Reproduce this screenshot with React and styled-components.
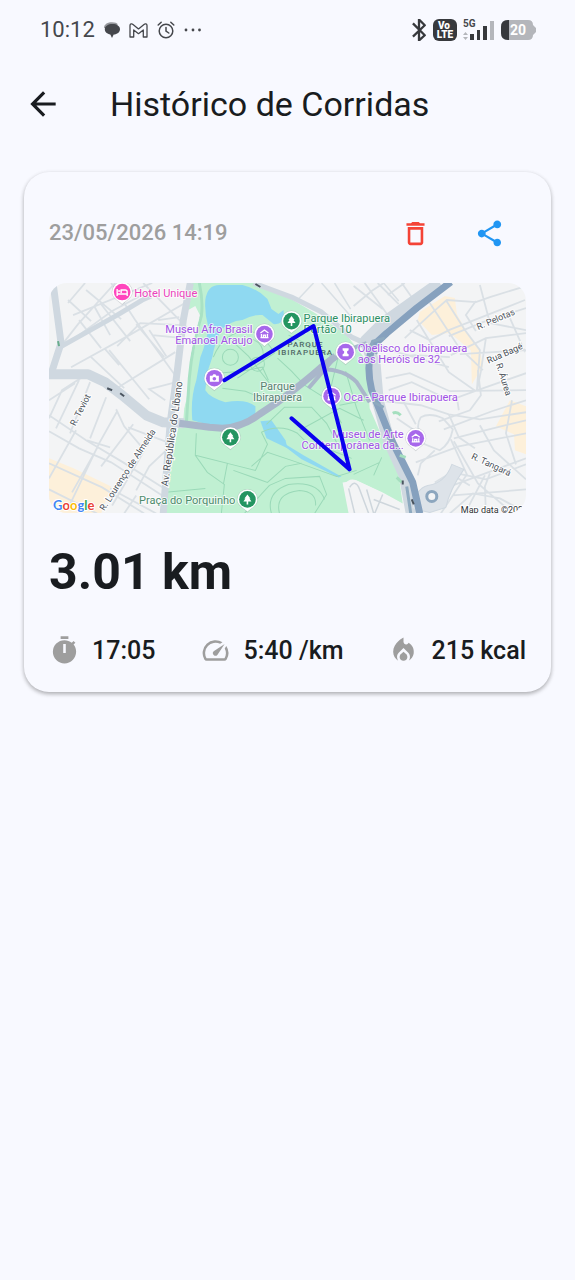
import React from "react";
import styled, { createGlobalStyle } from "styled-components";
import {
  MdArrowBack,
  MdDeleteOutline,
  MdLocalFireDepartment,
  MdShare,
  MdSpeed,
} from "react-icons/md";

const GlobalStyle = createGlobalStyle`
  * { box-sizing: border-box; }
  body {
    margin: 0;
    background: #f8f9ff;
    color: #191c20;
    font-family: Roboto, "Liberation Sans", sans-serif;
  }
`;

const Screen = styled.div`
  min-height: 100vh;
  background: #f8f9ff;
`;

const StatusBar = styled.div`
  display: flex;
  align-items: center;
  justify-content: space-between;
  height: 60px;
  padding: 0 38px 0 40px;
  color: #45474c;
`;

const StatusGroup = styled.div`
  display: flex;
  align-items: center;
  gap: ${(p) => p.$gap}px;
`;

const Clock = styled.time`
  font-size: 22px;
  line-height: 28px;
`;

const AppBar = styled.header`
  display: flex;
  align-items: center;
  gap: 30px;
  height: 88px;
  padding: 0 6px;
`;

const IconButton = styled.button`
  display: flex;
  align-items: center;
  justify-content: center;
  width: 74px;
  height: 74px;
  padding: 0;
  border: 0;
  border-radius: 50%;
  background: transparent;
  color: ${(p) => p.$color};
  font-size: ${(p) => p.$size}px;
  cursor: pointer;
`;

const Title = styled.h1`
  margin: 0;
  font-size: 34px;
  line-height: 42px;
  font-weight: 400;
  white-space: nowrap;
`;

const Main = styled.main`
  padding: 24px;
`;

const RunCard = styled.article`
  padding: 24px 25px 26px;
  border-radius: 25px;
  background: #f8f9ff;
  box-shadow: 0 2px 4px rgba(0, 0, 0, 0.28), 0 1px 5px rgba(0, 0, 0, 0.06);
`;

const CardHeader = styled.div`
  display: flex;
  align-items: center;
  justify-content: space-between;
`;

const Actions = styled.div`
  display: flex;
`;

const RunDate = styled.time`
  color: #9e9e9e;
  font-size: 22px;
  line-height: 28px;
  font-weight: 500;
`;

const MapFrame = styled.figure`
  margin: 13px 0 0;
  border-radius: 18px;
  overflow: hidden;

  svg {
    display: block;
    width: 100%;
    height: auto;
  }
`;

const Distance = styled.h2`
  margin: 24px 0 0;
  font-size: 50px;
  line-height: 70px;
  font-weight: 700;
`;

const Stats = styled.ul`
  display: flex;
  justify-content: space-between;
  margin: 28px 0 0;
  padding: 0;
  list-style: none;
`;

const Stat = styled.li`
  display: flex;
  align-items: center;
  gap: 12px;
  font-size: 25px;
  line-height: 31px;
  font-weight: 500;
  white-space: nowrap;

  svg {
    width: 31px;
    height: 31px;
    color: #9e9e9e;
  }
`;

const ChatIcon = () => (
  <svg width="16" height="16" viewBox="0 0 16 16" aria-hidden="true">
    <path d="M0 6C0 2 4 .3 8 .3c3 0 5 .9 6 2.200L3 6Z" fill="#96989d" />
    <path d="M8.500 2C12.800 2 16 4 16 7.200c0 3-2.900 5.100-6.300 5.300L8 16l-1.700-3.600C3.200 12 .8 9.900.8 7.200.8 4 4.200 2 8.500 2Z" fill="#45474c" />
  </svg>
);

const MailIcon = () => (
  <svg width="19" height="15" viewBox="0 0 19 15" aria-hidden="true">
    <path d="M1 2.500C1 .8 2.800.4 4 1.400l5.500 4.500L15 1.400c1.200-1 3-.6 3 1.100V14h-3.700V7l-4.800 3.700L4.700 7v7H1Z" fill="none" stroke="#45474c" strokeWidth="1.300" strokeLinejoin="round" />
  </svg>
);

const AlarmIcon = () => (
  <svg width="18" height="18" viewBox="0 0 18 18" fill="none" stroke="#45474c" strokeWidth="1.500" strokeLinecap="round" aria-hidden="true">
    <circle cx="9" cy="10" r="6.800" />
    <path d="M9 6.500V10l2.800 2M1.200 4 4.200 1.200M16.800 4 13.800 1.200" />
  </svg>
);

const MoreIcon = () => (
  <svg width="18" height="4" viewBox="0 0 18 4" fill="#45474c" aria-hidden="true">
    <circle cx="2" cy="2" r="1.400" />
    <circle cx="9" cy="2" r="1.400" />
    <circle cx="15.500" cy="2" r="1.400" />
  </svg>
);

const BluetoothIcon = () => (
  <svg width="16" height="22" viewBox="4 1.500 15 21" aria-hidden="true">
    <path d="M5.700 5.700 17 17 11.500 22V2L17 7.500 5.700 18.300" fill="none" stroke="#37393d" strokeWidth="2.200" strokeLinejoin="round" />
  </svg>
);

const VolteIcon = () => (
  <svg width="24" height="22" viewBox="0 0 24 22" role="img" aria-label="VoLTE">
    <rect width="24" height="22" rx="6" fill="#37393d" />
    <g fill="#fff" fontFamily="Roboto, sans-serif" fontWeight="900" textAnchor="middle">
      <text x="11" y="10" fontSize="10">Vo</text>
      <text x="12" y="19" fontSize="10">LTE</text>
    </g>
  </svg>
);

const SignalIcon = () => (
  <svg width="32" height="22" viewBox="0 0 32 22" role="img" aria-label="5G">
    <text x="0" y="8" fontFamily="Roboto, sans-serif" fontWeight="700" fontSize="10" fill="#45474c">5G</text>
    <path d="m0 16 2.500-3L5 16ZM0 18l2.500 3L5 18Z" fill="#b4b6bb" />
    <path d="M7 15h4v6H7ZM14 11h3v10h-3ZM20 7h4v14h-4Z" fill="#37393d" />
    <path d="M27 2h4v19h-4Z" fill="#b4b6bb" />
  </svg>
);

const BatteryIcon = () => (
  <svg width="36" height="20" viewBox="0 0 36 20" role="img" aria-label="20">
    <path d="M7 0h20q5 0 5 5l3 3v4l-3 3q0 5-5 5H7q-7 0-7-7V7q0-7 7-7Z" fill="#b4b6bb" />
    <path d="M8 0H7Q0 0 0 7v6q0 7 7 7h1Z" fill="#37393d" />
    <text x="17" y="15" fontFamily="Roboto, sans-serif" fontWeight="700" fontSize="14" fill="#fff" textAnchor="middle">20</text>
  </svg>
);

const TimerIcon = () => (
  <svg viewBox="0 0 24 24" fill="currentColor" aria-hidden="true">
    <path d="M19.030 7.390 20.450 5.970C20 5.460 19.550 5 19.040 4.560L17.620 6C16.070 4.740 14.120 4 12 4A9 9 0 0 0 3 13 9 9 0 0 0 12 22C17 22 21 17.970 21 13 21 10.880 20.260 8.930 19.030 7.390M13 14H11V7H13M15 1H9V3H15Z" />
  </svg>
);

const purple = "#a152e6";
const green = "#2c9064";

const pinGlyphs = {
  bed: <path d="M-5-3v7M-5 2H5V0Q5-2 3-2H-1V1M5 1v3M-4-1h2" fill="none" stroke="#fff" strokeWidth="1.400" />,
  museum: <path d="M-4-1 0-4 4-1M-4 3.500H4M-3 0v3M3 0v3M-1 3V1h2v2" fill="none" stroke="#fff" strokeWidth="1.300" />,
  camera: (
    <g>
      <path d="M-4.500-2.500H-2L-1-4H1L2-2.500H4.500V3.500H-4.500Z" fill="#fff" />
      <circle cy=".5" r="1.800" fill="#a768eb" />
    </g>
  ),
  tree: <path d="M0-5 3-1H2L4 2H.8V5H-.8V2H-4L-2-1H-3Z" fill="#fff" />,
  monument: <path d="M-3-4H3V-2L1.500-1V1L3 2V4H-3V2L-1.500 1V-1L-3-2Z" fill="#fff" />,
};

const Pin = ({ x, y, color, glyph }) => (
  <g transform={`translate(${x} ${y})`}>
    <path d="M0-10.500A10.500 10.500 0 0 1 10.500 0C10.500 6 5 8 0 13-5 8-10.500 6-10.500 0A10.500 10.500 0 0 1 0-10.500Z" fill="#8b959b" opacity=".35" />
    <path d="M0-10A10 10 0 0 1 10 0C10 5.500 4.500 8 0 12-4.500 8-10 5.500-10 0A10 10 0 0 1 0-10Z" fill="#fff" />
    <circle r="8.300" fill={color} />
    {pinGlyphs[glyph]}
  </g>
);

const MapLabel = ({ x, y, color, anchor = "start", lines }) => (
  <g fill={color} textAnchor={anchor} stroke="#fff" strokeOpacity=".7" strokeWidth="2" paintOrder="stroke" strokeLinejoin="round">
    {lines.map((line, i) => (
      <text key={line} x={x} y={y + i * 11}>{line}</text>
    ))}
  </g>
);

const StreetLabel = ({ x, y, angle, size = 9, children }) => (
  <text transform={`translate(${x} ${y}) rotate(${angle})`} fontSize={size} fill="#4a5159" textAnchor="middle" stroke="#fff" strokeWidth="2" paintOrder="stroke">
    {children}
  </text>
);

const RouteMap = () => (
  <svg viewBox="50 283 476 230" role="img" aria-label="Parque Ibirapuera">
    <rect x="50" y="283" width="476" height="230" fill="#f3f4f5" />

    {/* commercial blocks */}
    <g fill="#fdf0da">
      <path d="M50 458 75 468 112 486 102 513H50Z" />
      <path d="M420 312 445 296 455 298 457 314 468 334 480 350 483 366 472 384 471 350 450 333 432 335 418 320Z" />
      <path d="M510 400 526 406V454L515 450 514 434 496 426Z" />
    </g>

    {/* park */}
    <path d="M192 283H260L290 298 317 314 347 335 365 358 368 380 370 408 383 438 397 462 403 503 383 492 357 480 343 482 349 513H164L168 480 178 432 187 400 193 360 202 318 196 306 189 310Z" fill="#c0f0d2" />
    <path d="M200 283Q204 302 202 316 193 345 190 378L187 424" fill="none" stroke="#a9e2c4" strokeWidth="3" />
    <path d="M188 313 200 318Q194 340 188 370L184 420H177L184 360Z" fill="#f3f4f5" />

    {/* water */}
    <g fill="#8fd9f1">
      <path d="M206 300Q208 285 220 285H243Q259 289 268 299L272 309 279 314 284 310Q286 325 274 324L263 315Q254 314 243 320 230 321 221 331 215 345 213 357L208 372 206 390Q210 397 226 402 246 398 256 406L256 417Q240 424 218 427L193 420Q191 398 197 380L201 357Q208 340 209 327 205 314 206 300Z" />
      <path d="M261 421 272 420 286 440 288 448 267 438Z" />
      <path d="m286 444 18 11 34 19 4 2-3 1-37-18-17-13Z" />
    </g>

    {/* park trails */}
    <g fill="none" stroke="#9ad9b8" strokeWidth="1">
      <path d="M197 433 196 455 208 472 225 484 222 513M196 455 228 463 224 484M228 463 256 470 268 444 262 432M252 466 268 452 298 462 320 470 337 476 357 470M234 470 268 482 286 466 302 463M164 492 206 488M245 513Q256 500 270 485L286 478 320 476 327 494 315 513" />
      <path d="M272 513Q266 492 289 484 318 480 325 499M280 513Q275 493 300 490 317 491 316 505M262 432Q280 423 298 433L312 447 334 451 352 458M267 424 285 407 312 407 327 423 338 444" />
      <path d="M214 357Q224 332 250 330 267 338 275 353L256 366 238 378M235 343 249 356 270 383M252 339Q264 342 264 356M218 373 242 371 263 367 269 380M223 388 246 391 269 401M289 335 316 348 338 359 329 397M278 358 292 371 305 385 329 400 342 423M300 430 340 408 364 420M346 371 357 408 370 440M340 405 365 400" />
      <circle cx="231" cy="357" r="8" />
      <circle cx="258" cy="364" r="7" />
      <path d="m354 474 26-12M374 475l8-18" />
    </g>

    {/* parking lot */}
    <path d="M344 485Q350 476 359 481L380 491 402 503 405 513H350Z" fill="#f3f4f5" />
    <g fill="none" stroke="#ced6dc" strokeWidth="1.500">
      <path d="M350 487Q356 478 360 489L369 513M349 488l6 25M367 489l7 24M374 499l26 10M383 494l-8 19" />
    </g>

    {/* minor streets */}
    <g fill="none" stroke="#dae0e5" strokeWidth="1.800">
      <path d="M69 303 86 283M69 300 92 321M77 337 113 311 152 290M74 315 153 283M87 290 122 319M65 342 79 324 116 283M80 320 102 348M95 306 111 335M112 283 136 320 183 385M101 303 131 341M72 367 132 334 191 300M92 357 125 388M110 350 150 399M137 324 165 357M118 346 141 323 183 325M150 330 167 356M159 320 180 317M116 389 176 352M120 365 106 349M144 283 190 330M153 335 184 338" />
      <path d="M50 418 63 390 83 377M57 428 80 380M71 433 91 382M91 438 107 397M50 400 76 383M50 415 87 440 124 462 165 488M50 431 80 448 112 462 163 495M50 478 77 430M73 492 99 446M50 463 103 487 145 513M50 489 98 513M70 506 100 443 118 411M102 466 134 424M88 440 111 447M117 409 125 426 142 446M129 427 166 441M154 435 113 505M137 490 150 466 169 448M125 513 137 495M111 488 157 513M166 400 150 389 177 382" />
      <path d="M354 286 383 309M365 283 388 315M378 283 399 304M388 295 405 283M354 306 372 291 384 283M402 283 416 303M410 330 430 340 449 330 525 300M405 338 432 313 447 300 476 302 490 297 526 286M417 320 449 372 476 391M430 303 459 347 483 370M446 300 465 330 480 350 477 390M449 336 483 322 526 308M451 355 486 338 526 333M378 344 397 352 449 367M382 358 415 355 450 357M386 378 410 373 450 391 526 390M389 390 412 382 450 400 475 391 526 373M480 285 490 323 526 330M477 391 481 371 486 338M460 354 526 350M476 301 466 315 476 331M510 318 525 352M386 401 421 405 449 414 480 419 526 412" />
      <path d="M421 417Q430 412 443 418L453 429Q450 444 440 450L425 444Q414 428 421 417M416 424 402 398M416 431 397 418M439 421 470 410 481 395 478 370M444 429 492 411 526 400M454 438 485 430 526 420M454 441 478 483 513 513M480 425 494 450 526 479M416 462 459 446 526 433M435 450 421 463 418 475M451 439 467 474 441 513M453 485 526 458M457 473 486 479 526 464M453 495 491 492 526 489M450 513 473 493 500 498 526 512M465 513 485 475M486 513 485 486 490 473M470 485 450 473 435 482M457 397 459 410M449 414 459 437 475 448M512 400 506 433 516 464" />
    </g>
    <path d="M297 301 314 283M322 283 357 323M399 301 384 283M335 283 351 309" fill="none" stroke="#d8dfe4" strokeWidth="1.500" />

    {/* arterial roads */}
    <g fill="none" stroke="#cfd8e0" strokeLinejoin="round">
      <path d="M54 283 62 343 52 374" strokeWidth="7" />
      <path d="M61 347 118 315 143 300 152 296" strokeWidth="5" />
      <path d="M50 374H89L106 382 123 395 147 415 164 422 185 423" strokeWidth="10" />
      <path d="M191 283 184 320 178 371 171 422 164 513" strokeWidth="7" />
      <path d="M254 283 292 297 322 312 352 337 374 347" strokeWidth="5" />
      <path d="M440 283 385 322 366 341 375 365 378 400 389 440 405 475 412 513" strokeWidth="12" />
      <path d="M452 464Q445 483 428 485 416 488 412 508L430 512 446 507Q450 489 464 469Z" fill="#dde3e9" strokeWidth="1" />
    </g>

    {/* expressways */}
    <g fill="none" strokeLinejoin="round">
      <path d="M180 423 210 427 223 428Q243 427 260 414L278 402Q304 383 323 366L336 356" stroke="#a9b6ca" strokeWidth="7" />
      <path d="M309 388 333 360Q345 350 367 343M322 369Q345 369 357 382L370 402" stroke="#a9b6ca" strokeWidth="4" />
      <path d="M451 282 417 308 387 333 373 346Q366 365 372 390L393 442 413 482 420 513" stroke="#86a1be" strokeWidth="7" />
      <path d="M385 338 373 341 370 349 378 353M374 402 384 407M407 486 411 513" stroke="#8da9bf" strokeWidth="3" />
      <circle cx="432" cy="496" r="5" stroke="#8ca6be" strokeWidth="3" fill="#f3f4f5" />
    </g>
    <path d="M393 413q4-2 8 2M400 455l6 2M397 477l5 5" stroke="#a5dfbf" strokeWidth="3" fill="none" />
    <path d="m108 388 5 2M121 393l4 3M256 284l5 3M403 480v4M412 499l2 5" stroke="#4b5560" strokeWidth="2" />
    <path d="m59 341 1 5" stroke="#69ad8d" strokeWidth="2" />

    <g fontFamily="Roboto, sans-serif" fontSize="11">
      <StreetLabel x={84} y={411} angle={-63}>R. Teviot</StreetLabel>
      <StreetLabel x={131} y={471} angle={-57}>R. Lourenço de Almeida</StreetLabel>
      <StreetLabel x={176} y={434} angle={-82} size={10}>Av. República do Líbano</StreetLabel>
      <StreetLabel x={497} y={322} angle={-23}>R. Pelotas</StreetLabel>
      <StreetLabel x={506} y={356} angle={-24}>Rua Bagé</StreetLabel>
      <StreetLabel x={501} y={380} angle={73}>R. Áurea</StreetLabel>
      <StreetLabel x={490} y={467} angle={25}>R. Tangará</StreetLabel>

      <MapLabel x={135} y={297} color="#ec43bd" lines={["Hotel Unique"]} />
      <MapLabel x={253} y={333} color={purple} anchor="end" lines={["Museu Afro Brasil", "Emanoel Araujo"]} />
      <MapLabel x={304} y={322} color={green} lines={["Parque Ibirapuera", "Portão 10"]} />
      <MapLabel x={358} y={352} color={purple} lines={["Obelisco do Ibirapuera", "aos Heróis de 32"]} />
      <MapLabel x={344} y={401} color={purple} lines={["Oca - Parque Ibirapuera"]} />
      <MapLabel x={404} y={438} color={purple} anchor="end" lines={["Museu de Arte", "Contemporânea da..."]} />
      <MapLabel x={278} y={390} color="#5a8173" anchor="middle" lines={["Parque", "Ibirapuera"]} />
      <MapLabel x={236} y={504} color="#4d8b6d" anchor="end" lines={["Praça do Porquinho"]} />
      <g fontSize="8" fontWeight="500" letterSpacing="1" textAnchor="middle" fill="#506a68">
        <text x="306" y="347">PARQUE</text>
        <text x="306" y="355">IBIRAPUERA</text>
      </g>
      <text x="461" y="513" fontSize="9" fill="#2e3135" stroke="#fff" strokeWidth="2" paintOrder="stroke">Map data ©202</text>
    </g>

    <Pin x={123} y={292} color="#ff46bd" glyph="bed" />
    <Pin x={265} y={334} color="#a768eb" glyph="museum" />
    <Pin x={215} y={378} color="#a768eb" glyph="camera" />
    <Pin x={292} y={321} color="#249561" glyph="tree" />
    <Pin x={346} y={352} color="#a768eb" glyph="monument" />
    <Pin x={332} y={396} color="#a768eb" glyph="museum" />
    <Pin x={231} y={437} color="#249561" glyph="tree" />
    <Pin x={248} y={499} color="#249561" glyph="tree" />
    <Pin x={416} y={438} color="#a768eb" glyph="museum" />

    <path d="M225 380 314 326 350 469 292 418" fill="none" stroke="#0a00ef" strokeWidth="4" strokeLinecap="round" strokeLinejoin="round" />

    <text x="54" y="510" fontFamily="Lato, sans-serif" fontWeight="700" fontSize="13" stroke="#fff" strokeWidth="2" paintOrder="stroke">
      <tspan fill="#4285f4">G</tspan>
      <tspan fill="#ea4335">o</tspan>
      <tspan fill="#fbbc05">o</tspan>
      <tspan fill="#4285f4">g</tspan>
      <tspan fill="#34a853">l</tspan>
      <tspan fill="#ea4335">e</tspan>
    </text>
  </svg>
);

export default function App() {
  return (
    <Screen>
      <GlobalStyle />
      <StatusBar>
        <StatusGroup $gap={9}>
          <Clock>10:12</Clock>
          <ChatIcon />
          <MailIcon />
          <AlarmIcon />
          <MoreIcon />
        </StatusGroup>
        <StatusGroup $gap={6}>
          <BluetoothIcon />
          <VolteIcon />
          <SignalIcon />
          <BatteryIcon />
        </StatusGroup>
      </StatusBar>
      <AppBar>
        <IconButton type="button" aria-label="Voltar" $color="#191c20" $size={38}>
          <MdArrowBack />
        </IconButton>
        <Title>Histórico de Corridas</Title>
      </AppBar>
      <Main>
        <RunCard>
          <CardHeader>
            <RunDate dateTime="2026-05-23T14:19">23/05/2026 14:19</RunDate>
            <Actions>
              <IconButton type="button" aria-label="Excluir" $color="#f44336" $size={31}>
                <MdDeleteOutline />
              </IconButton>
              <IconButton type="button" aria-label="Compartilhar" $color="#2196f3" $size={31}>
                <MdShare />
              </IconButton>
            </Actions>
          </CardHeader>
          <MapFrame>
            <RouteMap />
          </MapFrame>
          <Distance>3.01 km</Distance>
          <Stats>
            <Stat><TimerIcon />17:05</Stat>
            <Stat><MdSpeed />5:40 /km</Stat>
            <Stat><MdLocalFireDepartment />215 kcal</Stat>
          </Stats>
        </RunCard>
      </Main>
    </Screen>
  );
}
